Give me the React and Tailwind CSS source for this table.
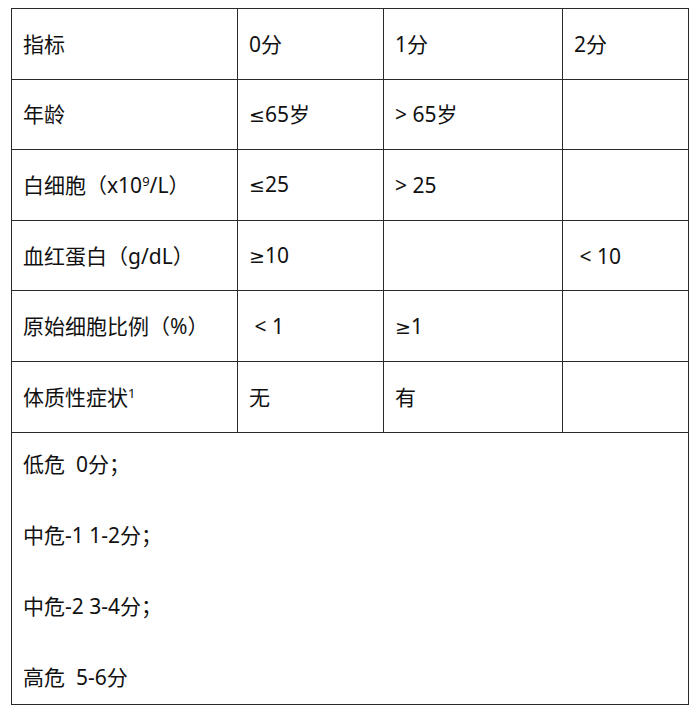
const Le = ({ children }) => (
  <span style={{ fontFamily: '"DejaVu Sans", sans-serif' }} className="text-[19px]">
    {children}
  </span>
);

const rows = [
  ["指标", "0分", "1分", "2分"],
  ["年龄", <><Le>≤</Le>65岁</>, "> 65岁", ""],
  [
    <>
      白细胞（x10<sup className="text-[13px]">9</sup>/L）
    </>,
    <><Le>≤</Le>25</>,
    "> 25",
    "",
  ],
  ["血红蛋白（g/dL）", <><Le>≥</Le>10</>, "", " < 10"],
  ["原始细胞比例（%）", " < 1", <><Le>≥</Le>1</>, ""],
  [
    <>
      体质性症状<sup className="text-[13px]">1</sup>
    </>,
    "无",
    "有",
    "",
  ],
];

const levels = ["低危  0分；", "中危-1 1-2分；", "中危-2 3-4分；", "高危  5-6分"];

export default function App() {
  return (
    <div
      className="min-h-[717px] bg-white pl-[11px] pt-[8px] text-[21px] text-[#111]"
      style={{ fontFamily: '"Noto Sans", "Noto Sans CJK SC", sans-serif' }}
    >
      <table className="w-[677px] table-fixed border-collapse">
        <colgroup>
          <col className="w-[226px]" />
          <col className="w-[146px]" />
          <col className="w-[179px]" />
          <col className="w-[126px]" />
        </colgroup>
        <tbody>
          {rows.map((row, i) => (
            <tr key={i}>
              {row.map((cell, j) => (
                <td
                  key={j}
                  className="h-[70.6px] whitespace-pre border border-[#2a2a2a] px-[11px] align-middle leading-[28px]"
                >
                  {cell}
                </td>
              ))}
            </tr>
          ))}
          <tr>
            <td colSpan={4} className="border border-[#2a2a2a] px-[11px] pt-[17px] pb-[13px]">
              <div className="flex flex-col gap-[43px]">
                {levels.map((l) => (
                  <p key={l} className="whitespace-pre leading-[28px]">
                    {l}
                  </p>
                ))}
              </div>
            </td>
          </tr>
        </tbody>
      </table>
    </div>
  );
}
